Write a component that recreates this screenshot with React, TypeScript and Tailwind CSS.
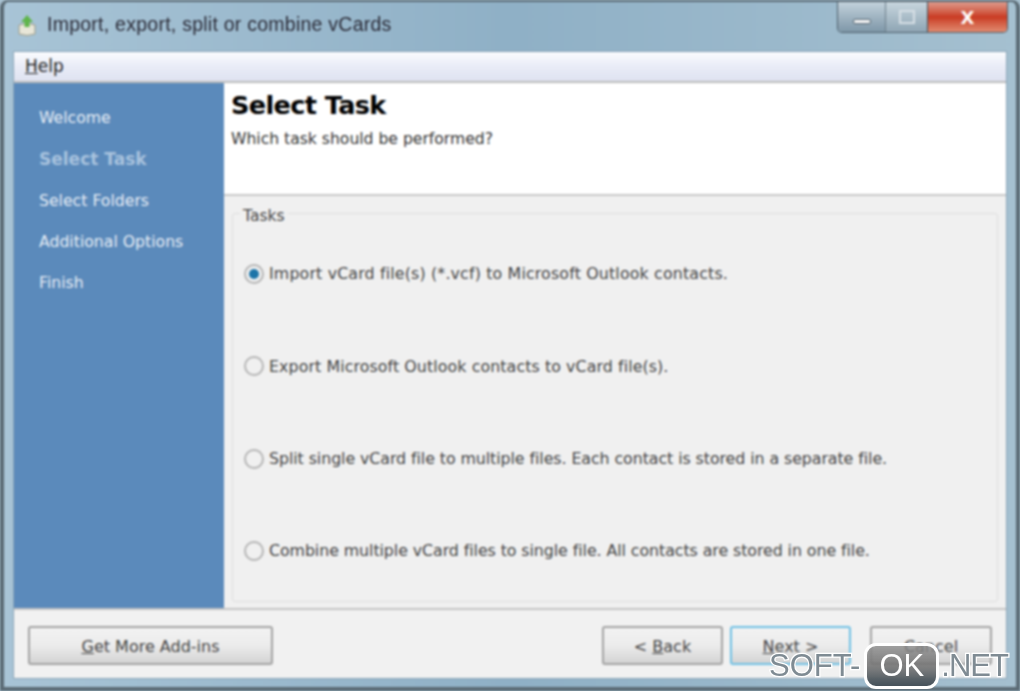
import React from 'react';

const steps = [
  { label: 'Welcome', active: false },
  { label: 'Select Task', active: true },
  { label: 'Select Folders', active: false },
  { label: 'Additional Options', active: false },
  { label: 'Finish', active: false },
];

const tasks = [
  { label: 'Import vCard file(s) (*.vcf) to Microsoft Outlook contacts.', spacing: 'tracking-[0.17px]' },
  { label: 'Export Microsoft Outlook contacts to vCard file(s).', spacing: 'tracking-[0.1px]' },
  { label: 'Split single vCard file to multiple files. Each contact is stored in a separate file.', spacing: 'tracking-[-0.06px]' },
  { label: 'Combine multiple vCard files to single file. All contacts are stored in one file.', spacing: 'tracking-[-0.06px]' },
];

const AppIcon = () => (
  <svg width="20" height="24" viewBox="0 0 20 24">
    <path d="M2 12 L10 10 L18 12 L18 21 Q10 24 2 21 Z" fill="#e8e6d8" stroke="#9a9a88" strokeWidth="1" />
    <path d="M10 2 L16 9 L12.5 9 L12.5 14 L7.5 14 L7.5 9 L4 9 Z" fill="#5fb54a" />
  </svg>
);

const Radio = ({ checked }: { checked: boolean }) => (
  <span className="w-[20px] h-[20px] rounded-full border-2 border-[#b5b5b5] bg-[#f0f0f0] flex items-center justify-center shrink-0">
    {checked && <span className="w-[10px] h-[10px] rounded-full bg-[#1c74a8]" />}
  </span>
);

const Btn = ({ children, w, focus }: { children: React.ReactNode; w: string; focus?: boolean }) => (
  <button
    className={`${w} h-[39px] pt-[2px] rounded-[3px] border-2 ${focus ? 'border-[#6fc0e4]' : 'border-[#a3a3a3]'} bg-gradient-to-b from-[#f2f2f2] via-[#ececec] to-[#d4d4d4] text-[16px] text-[#444]`}
  >
    {children}
  </button>
);

export default function App() {
  return (
    <div className="relative w-[1020px] h-[691px] overflow-hidden bg-[#a9c2d2] font-['DejaVu_Sans',sans-serif]">
      <div className="w-full h-full flex flex-col blur-[1px] bg-gradient-to-r from-[#a8c4d6] via-[#8fb0c6] to-[#a5c0d0] border-t-2 border-x-4 border-b-4 border-[#5a6a74] rounded-t-[8px]">
        {/* Title bar */}
        <div className="h-[49px] flex items-start shrink-0 pl-[13px] pr-[8px]">
          <div className="flex items-center gap-[10px] pt-[8px]">
            <AppIcon />
            <span className="text-[19.5px] font-['Liberation_Sans',sans-serif] tracking-[0.25px] text-[#2a2a36]">Import, export, split or combine vCards</span>
          </div>
          <div className="ml-auto flex h-[31px] rounded-b-[5px] border border-t-0 border-[#4d5e6a] overflow-hidden">
            <div className="w-[48px] border-r border-[#6d7f8b] bg-gradient-to-b from-[#c3d2dc] to-[#7e97a8] flex items-center justify-center pt-[8px]">
              <span className="w-[18px] h-[5px] rounded-[2px] bg-white border border-[#4f5f6b]" />
            </div>
            <div className="w-[42px] border-r border-[#3f4e58] bg-gradient-to-b from-[#c8d6de] to-[#8ea5b4] flex items-center justify-center">
              <span className="w-[16px] h-[14px] border-2 border-[#d7e0e6]" />
            </div>
            <div className="w-[79px] bg-gradient-to-b from-[#dc9a8c] via-[#c93a22] to-[#e08a70] flex items-center justify-center text-white font-bold text-[18px]">
              X
            </div>
          </div>
        </div>

        {/* Client area */}
        <div className="mx-[9px] flex-1 flex flex-col bg-[#f0f0f0] border border-[#8aa5b8]">
          <div className="h-[31px] shrink-0 flex items-center pl-[11px] bg-gradient-to-b from-[#fbfcfe] via-[#e9ecf7] to-[#dfe3f1] border-b-2 border-[#bcbcbc] text-[17px] text-[#222]">
            <span><span className="underline">H</span>elp</span>
          </div>
          <div className="flex-1 flex min-h-0">
            <div className="w-[210px] shrink-0 bg-[#5b8abb] pl-[25px] pt-[25px] flex flex-col gap-[21.3px] text-[15.7px] leading-[20px] text-[#e8eef6]">
              {steps.map((s) => (
                <div key={s.label} className={s.active ? 'font-bold text-[#a9c3de] text-[17px]' : ''}>
                  {s.label}
                </div>
              ))}
            </div>
            <div className="flex-1 flex flex-col min-w-0">
              <div className="h-[113px] shrink-0 bg-white border-b-2 border-[#c9c9c9] pl-[7px] pt-[5px]">
                <div className="text-[25.5px] leading-[34px] font-bold text-black tracking-[-0.6px]">Select Task</div>
                <div className="text-[15.6px] leading-[22px] mt-[6px] text-[#333]">Which task should be performed?</div>
              </div>
              <div className="flex-1 px-[8px] pt-[17px] pb-[6px] flex">
                <div className="relative flex-1 border border-[#dedede] rounded-[3px] pl-[11px] flex flex-col justify-around pt-[14px] pb-[4px]">
                  <span className="absolute left-[7px] top-[-8px] px-[3px] bg-[#f0f0f0] text-[15.5px] leading-[20px] text-[#444]">Tasks</span>
                  {tasks.map((t, i) => (
                    <label key={t.label} className={`flex items-center gap-[5px] text-[15.8px] text-[#444] ${t.spacing}`}>
                      <Radio checked={i === 0} />
                      {t.label}
                    </label>
                  ))}
                </div>
              </div>
            </div>
          </div>
          <div className="h-[70px] shrink-0 border-t-2 border-[#c4c4c4] flex items-start pt-[16px] pl-[14px] pr-[14px] bg-[#f1f1f1]">
            <Btn w="w-[245px]"><span><span className="underline">G</span>et More Add-ins</span></Btn>
            <div className="ml-auto flex gap-[7px]">
              <Btn w="w-[121px]"><span>&lt; <span className="underline">B</span>ack</span></Btn>
              <Btn w="w-[121px]" focus><span><span className="underline">N</span>ext &gt;</span></Btn>
              <div className="w-[5px]" />
              <Btn w="w-[122px]">Cancel</Btn>
            </div>
          </div>
        </div>
        <div className="h-[8px] shrink-0" />
      </div>

      {/* Watermark */}
      <div className="absolute left-[769px] top-[643px] h-[46px] flex items-center text-[31px] blur-[0.5px] text-[#7f8b93] [-webkit-text-stroke:2.5px_#ffffff] [paint-order:stroke_fill] font-['Liberation_Sans',sans-serif]">
        <span>SOFT-</span>
        <span className="ml-[4px] w-[75px] h-[46px] rounded-[12px] border-[3px] border-white bg-gradient-to-b from-[#8b8b8b]/80 via-[#6e6e6e]/85 to-[#46525a] flex items-center justify-center text-white [-webkit-text-stroke:0px_#ffffff]">OK</span>
        <span className="ml-[2px] tracking-[-1px]">.NET</span>
      </div>
    </div>
  );
}
